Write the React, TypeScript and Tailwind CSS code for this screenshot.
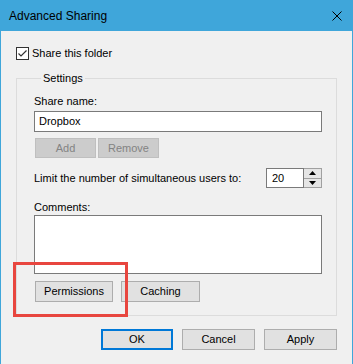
const font = { fontFamily: '"Liberation Sans", Arial, sans-serif' }

function WinButton({
  label,
  disabled,
  primary,
  className = '',
}: {
  label: string
  disabled?: boolean
  primary?: boolean
  className?: string
}) {
  if (disabled) {
    return (
      <button
        disabled
        className={`border border-[#bfbfbf] bg-[#cccccc] text-[11px] leading-none text-[#838383] ${className}`}
      >
        {label}
      </button>
    )
  }
  return (
    <button
      className={`bg-[#e1e1e1] text-[11px] leading-none text-black ${
        primary ? 'border-2 border-[#0078d7]' : 'border border-[#adadad]'
      } ${className}`}
    >
      {label}
    </button>
  )
}

export default function App() {
  return (
    <div
      className="relative w-[353px] h-[364px] bg-[#3fa6da] overflow-hidden text-[11px] text-black"
      style={font}
    >
      {/* Title bar */}
      <div className="h-[31px] flex items-center justify-between pl-[9px] pr-[11px]">
        <span className="text-[12px] text-black">Advanced Sharing</span>
        <svg width="10" height="10" viewBox="0 0 10 10">
          <path d="M0.5 0.5 L9.5 9.5 M9.5 0.5 L0.5 9.5" stroke="#000" strokeWidth="1" />
        </svg>
      </div>

      {/* Body */}
      <div className="mx-px h-[333px] bg-[#f0f0f0] px-[15px] pt-[16px]">
        <label className="flex items-center gap-[3px] h-[13px]">
          <span className="w-[13px] h-[13px] border border-[#333333] bg-white flex items-center justify-center">
            <svg width="11" height="11" viewBox="0 0 11 11">
              <path d="M1.5 5.5 L4 8 L9.5 2.5" stroke="#333" strokeWidth="1.2" fill="none" />
            </svg>
          </span>
          <span className="leading-none">Share this folder</span>
        </label>

        <fieldset className="mt-[10px] w-[321px] h-[246px] border border-[#dcdcdc] pl-[17px] pr-[14px]">
          <legend className="ml-[7px] px-[2px] leading-[16px]">Settings</legend>

          <div className="mt-[7px] leading-[16px]">Share name:</div>
          <div className="mt-[2px] h-[21px] border border-[#7a7a7a] bg-white flex items-center px-[4px]">
            Dropbox
          </div>

          <div className="mt-[6px] flex gap-[2px] pl-px">
            <WinButton label="Add" disabled className="w-[61px] h-[20px]" />
            <WinButton label="Remove" disabled className="w-[61px] h-[20px]" />
          </div>

          <div className="mt-[10px] flex items-center justify-between">
            <span className="leading-[16px] whitespace-nowrap">Limit the number of simultaneous users to:</span>
            <div className="flex h-[20px]">
              <div className="w-[38px] border border-[#7a7a7a] bg-white flex items-center pl-[5px]">20</div>
              <div className="w-[18px] border border-[#a0a0a0] border-l-0 flex flex-col">
                <div className="flex-1 bg-[#e5e5e5] border-b border-[#a0a0a0] flex items-center justify-center">
                  <svg width="7" height="4" viewBox="0 0 7 4">
                    <path d="M3.5 0 L7 4 L0 4 Z" fill="#000" />
                  </svg>
                </div>
                <div className="flex-1 bg-[#e5e5e5] flex items-center justify-center">
                  <svg width="7" height="4" viewBox="0 0 7 4">
                    <path d="M0 0 L7 0 L3.5 4 Z" fill="#000" />
                  </svg>
                </div>
              </div>
            </div>
          </div>

          <div className="mt-[12px] leading-[15px]">Comments:</div>
          <div className="h-[59px] border border-[#7a7a7a] bg-white" />

          <div className="mt-[7px] flex gap-[8px] pl-px">
            <WinButton label="Permissions" className="w-[78px] h-[21px]" />
            <WinButton label="Caching" className="w-[79px] h-[21px]" />
          </div>
        </fieldset>

        <div className="mt-[13px] flex justify-end gap-[9px]">
          <WinButton label="OK" primary className="w-[72px] h-[21px]" />
          <WinButton label="Cancel" className="w-[73px] h-[21px]" />
          <WinButton label="Apply" className="w-[73px] h-[21px]" />
        </div>
      </div>

      {/* Highlight box */}
      <div className="absolute left-[13px] top-[262px] w-[115px] h-[55px] border-[3px] border-[#e8463f]" />
    </div>
  )
}
